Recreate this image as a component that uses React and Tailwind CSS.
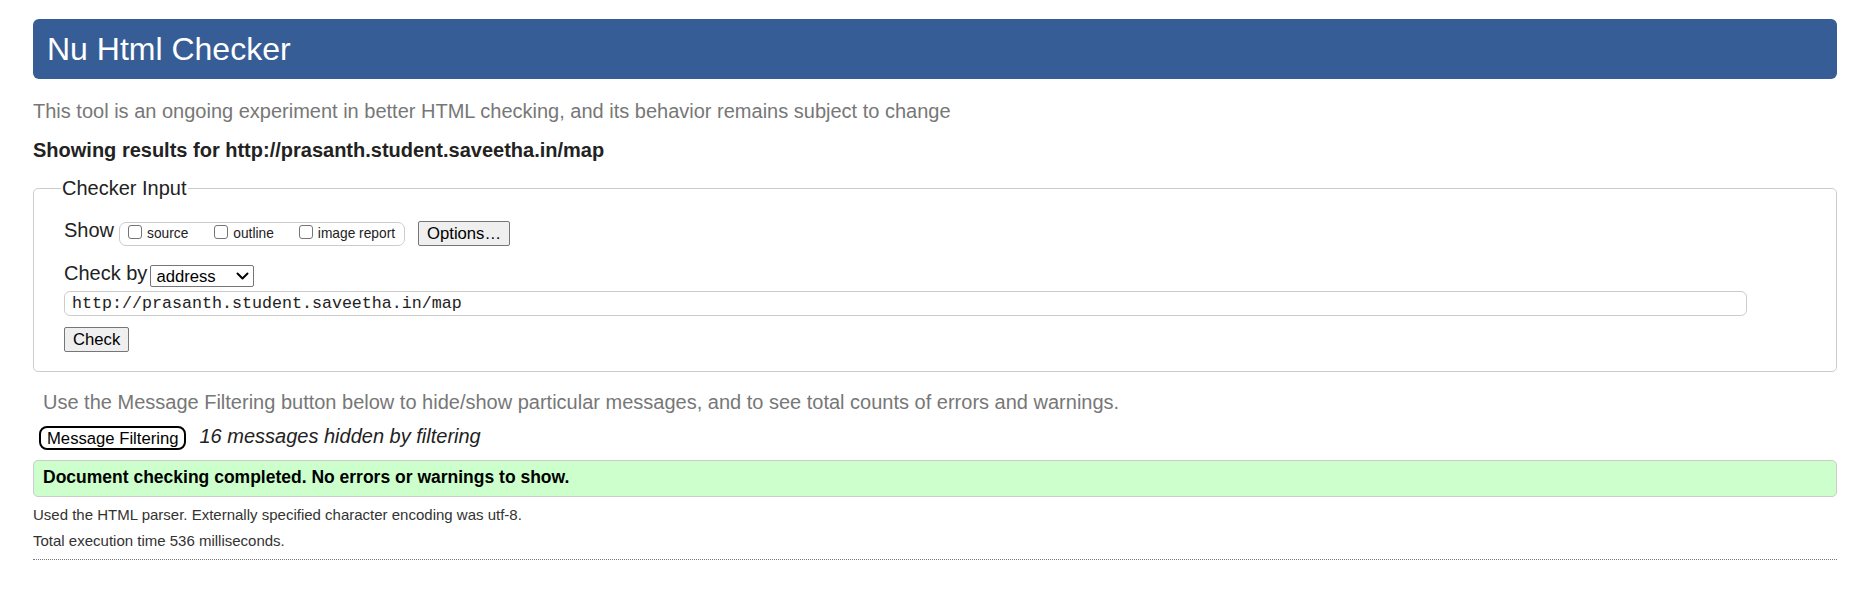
const ChevronDown = () => (
  <svg width="13" height="8" viewBox="0 0 13 8" fill="none" className="ml-auto">
    <path d="M1.5 1.5 L6.5 6.5 L11.5 1.5" stroke="#000" strokeWidth="2" strokeLinecap="round" strokeLinejoin="round" />
  </svg>
);

const Checkbox = () => (
  <input
    type="checkbox"
    className="mt-[1px] h-[14px] w-[14px] shrink-0 appearance-none rounded-[3px] border border-[#767676] bg-white"
  />
);

const ShowOption = ({ label, className = "" }) => (
  <label className={`flex items-start ${className}`}>
    <Checkbox />
    <span className="ml-[5px] mt-[2px] text-[13.75px] leading-[16px]">{label}</span>
  </label>
);

const App = () => {
  return (
    <div className="min-h-screen bg-white pl-[33px] pr-[14px] pt-[19px] font-['Liberation_Sans',Arial,sans-serif] text-[#222]">
      {/* HEADER */}
      <h1 className="h-[60px] rounded-[6px] bg-[#365d95] pl-[14px] text-[32px] font-normal leading-[60px] text-white">
        Nu Html Checker
      </h1>

      <p className="mt-[21px] text-[20px] leading-[23px] text-[#777]">
        This tool is an ongoing experiment in better HTML checking, and its behavior remains subject to change
      </p>

      <p className="mt-[16px] text-[20px] font-bold leading-[23px]">
        Showing results for http://prasanth.student.saveetha.in/map
      </p>

      {/* CHECKER INPUT */}
      <fieldset className="mt-[15px] rounded-[5px] border border-[#ccc] pb-[19px] pl-[30px] pt-[19px]">
        <legend className="-ml-[3px] px-[1px] text-[20px] leading-[23px]">Checker Input</legend>

        <div className="flex h-[27px] items-start">
          <span className="text-[20px] leading-[23px]">Show</span>
          <div className="ml-[5px] mt-[3px] flex h-[24px] items-start rounded-[7px] border border-[#ccc] pl-[8px] pr-[9px] pt-[1px]">
            <ShowOption label="source" />
            <ShowOption label="outline" className="ml-[26px]" />
            <ShowOption label="image report" className="ml-[25px]" />
          </div>
          <button className="ml-[13px] mt-[2px] h-[25px] rounded-[2px] border border-[#767676] bg-[#efefef] px-[8px] text-[16.67px] leading-[19px] text-black">
            Options…
          </button>
        </div>

        <div className="mt-[16px] flex h-[25px] items-start">
          <span className="text-[20px] leading-[23px]">Check by</span>
          <div className="ml-[3px] mt-[3px] flex h-[22px] w-[104px] items-center rounded-[2px] border border-[#767676] bg-white pl-[5px] pr-[4px] text-[16.67px] leading-[19px] text-black">
            address
            <ChevronDown />
          </div>
        </div>

        <div className="mt-[4px] mr-[89px] flex h-[25px] items-center rounded-[6px] border border-[#ccc] pl-[7px] font-['Liberation_Mono',monospace] text-[16.67px] leading-[19px]">
          http://prasanth.student.saveetha.in/map
        </div>

        <button className="mt-[11px] h-[25px] rounded-[2px] border border-[#767676] bg-[#efefef] px-[8px] text-[16.67px] leading-[19px] text-black">
          Check
        </button>
      </fieldset>

      {/* RESULTS */}
      <p className="mt-[19px] pl-[10px] text-[20px] leading-[23px] text-[#777]">
        Use the Message Filtering button below to hide/show particular messages, and to see total counts of errors and warnings.
      </p>

      <div className="mt-[11px] flex h-[25px] items-start">
        <button className="ml-[6px] mt-[1px] h-[24px] rounded-[8px] border-2 border-black bg-white px-[6px] text-[16.67px] leading-[19px] text-black">
          Message Filtering
        </button>
        <span className="ml-[13px] text-[20px] italic leading-[23px]">16 messages hidden by filtering</span>
      </div>

      <div className="mt-[10px] h-[37px] rounded-[5px] border border-[#ccc] bg-[#ccffcc] pl-[9px] pt-[6px] text-[17.5px] font-bold leading-[20px] text-black">
        Document checking completed. No errors or warnings to show.
      </div>

      <p className="mt-[9px] text-[15px] leading-[17px] text-[#333]">
        Used the HTML parser. Externally specified character encoding was utf-8.
      </p>
      <p className="mt-[9px] text-[15px] leading-[17px] text-[#333]">Total execution time 536 milliseconds.</p>

      <div className="mt-[10px] border-t border-dotted border-[#777]" />
    </div>
  );
};

export default App;
